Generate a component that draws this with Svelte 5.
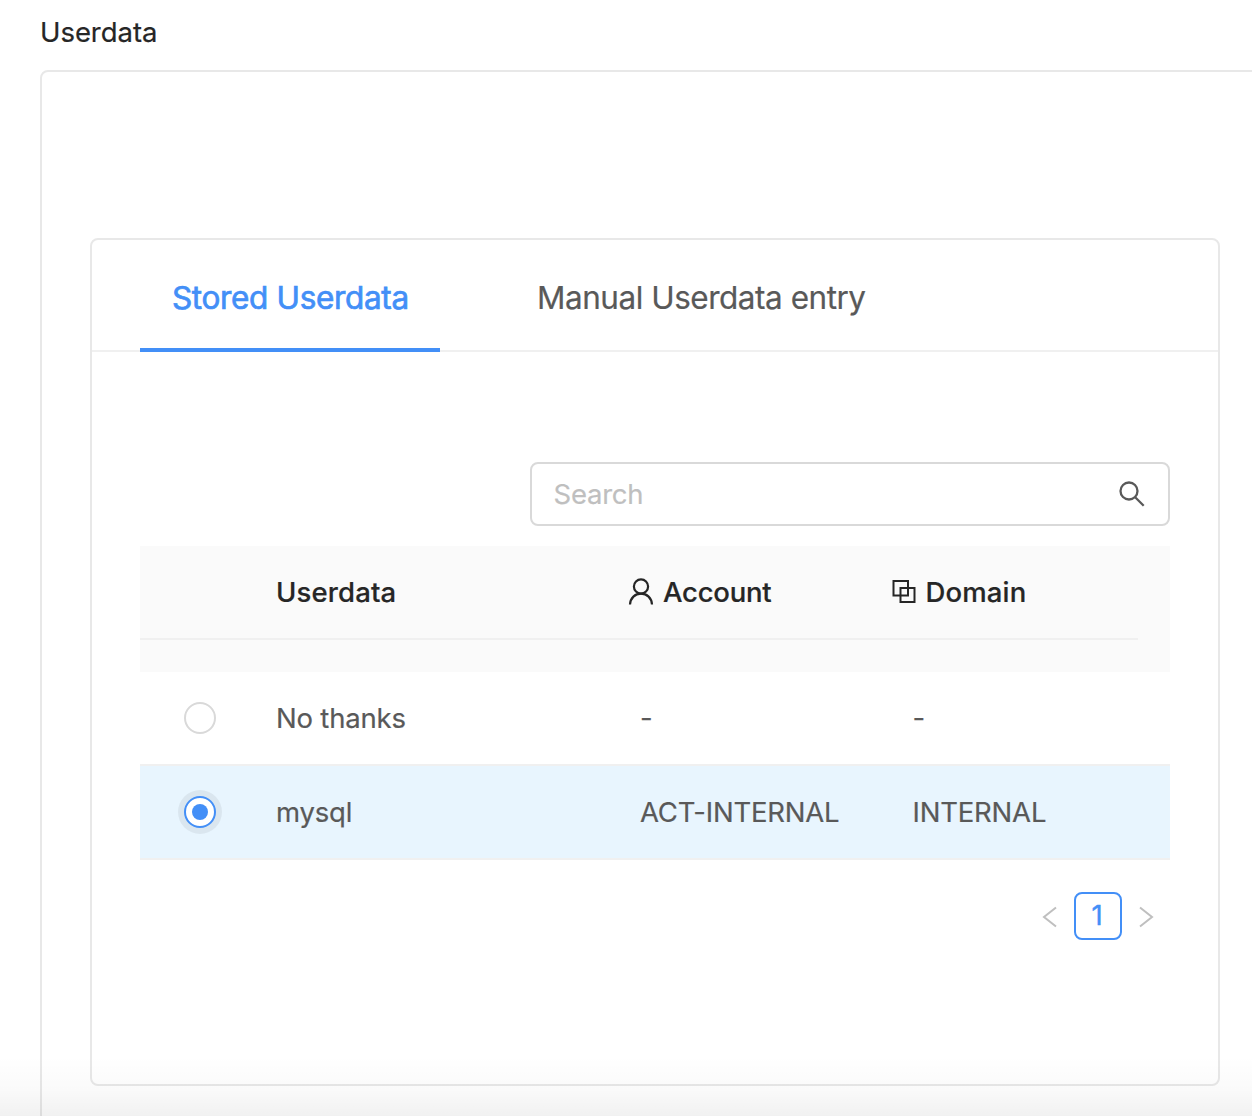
<script>
  let selected = $state('mysql');
  const tabs = ['Stored Userdata', 'Manual Userdata entry'];
  const rows = [
    { name: 'No thanks', account: '-', domain: '-' },
    { name: 'mysql', account: 'ACT-INTERNAL', domain: 'INTERNAL' }
  ];
</script>

<main class="page">
  <h1 class="title">Userdata</h1>
  <section class="outer">
    <div class="card">
      <nav class="tabs">
        <button class="tab active">{tabs[0]}</button>
        <button class="tab">{tabs[1]}</button>
      </nav>
      <div class="content">
        <div class="search">
          <span class="placeholder">Search</span>
          <svg viewBox="0 0 28 28" width="28" height="28" fill="none" stroke="#595959" stroke-width="2.3">
            <circle cx="11" cy="11" r="8.500" />
            <path d="M17.200 17.200 25.700 25.700" />
          </svg>
        </div>

        <div class="table">
          <div class="thead">
            <div class="row head">
              <div></div>
              <div>Userdata</div>
              <div class="with-icon account">
                <svg viewBox="0 0 26 28" width="26" height="28" fill="none" stroke="#262626" stroke-width="2.200">
                  <circle cx="13" cy="8.500" r="7.100" />
                  <path d="M2 26.500C2.400 20 7 15.600 13 15.600s10.600 4.400 11 10.900" />
                </svg>
                <span>Account</span>
              </div>
              <div class="with-icon domain">
                <svg viewBox="0 0 24 26" width="24" height="26" fill="none" stroke="#262626" stroke-width="2">
                  <path d="M1.500 2h14.500v14.500h-14.500zM8.500 9h14v14h-14z" />
                </svg>
                <span>Domain</span>
              </div>
            </div>
          </div>
          {#each rows as row}
            <div class="row body" class:selected={selected === row.name}>
              <button class="radio" aria-label={row.name} onclick={() => (selected = row.name)}></button>
              <div>{row.name}</div>
              <div>{row.account}</div>
              <div>{row.domain}</div>
            </div>
          {/each}
        </div>

        <div class="pagination">
          <svg viewBox="0 0 16 24" width="16" height="24" fill="none" stroke="#bfbfbf" stroke-width="2">
            <path d="M14 3.500 2 13l12 9.500" />
          </svg>
          <button class="current">1</button>
          <svg viewBox="0 0 16 24" width="16" height="24" fill="none" stroke="#bfbfbf" stroke-width="2">
            <path d="M2 3.500 14 13 2 22.500" />
          </svg>
        </div>
      </div>
    </div>
  </section>
  <div class="fade"></div>
</main>

<style>
  :global(body) { overflow: hidden; background: #fff; }
  .page {
    position: relative;
    box-sizing: border-box;
    width: 1252px;
    height: 1116px;
    padding-left: 40px;
    overflow: hidden;
    font-family: Inter, "Liberation Sans", sans-serif;
    font-size: 27.5px;
    color: #595959;
    white-space: nowrap;
    -webkit-text-stroke: 0.2px currentColor;
  }
  .page * { box-sizing: border-box; }
  button { padding: 0; border: 0; background: none; font: inherit; color: inherit; }
  .title {
    display: flex;
    align-items: center;
    height: 70px;
    margin: 0;
    padding-bottom: 6px;
    font-size: inherit;
    font-weight: 400;
    letter-spacing: -0.05px;
    color: #262626;
  }
  .outer {
    width: 1300px;
    height: 1300px;
    padding: 166px 0 0 48px;
    border: 2px solid #e8e8e8;
    border-radius: 8px;
  }
  .card {
    width: 1130px;
    height: 848px;
    border: 2px solid #e8e8e8;
    border-radius: 8px;
  }
  .tabs {
    display: flex;
    gap: 65px;
    height: 112px;
    padding-left: 48px;
    border-bottom: 2px solid #f0f0f0;
    font-size: 31.5px;
  }
  .tab {
    height: 112px;
    padding: 6px 32px 0;
    border-bottom: 4px solid transparent;
    letter-spacing: -0.48px;
  }
  .tab.active {
    width: 300px;
    text-align: left;
    letter-spacing: -0.34px;
    border-color: #438ff7;
    color: #438ff7;
    -webkit-text-stroke: 0.7px #438ff7;
  }
  .content { padding: 110px 48px 0; }
  .search {
    display: flex;
    align-items: center;
    justify-content: space-between;
    width: 640px;
    height: 64px;
    margin-left: auto;
    padding: 0 22px 0 21.5px;
    border: 2px solid #d9d9d9;
    border-radius: 8px;
    letter-spacing: -0.25px;
    color: #bfbfbf;
  }
  .table { margin-top: 20px; }
  .thead { height: 126px; padding-right: 32px; background: #fafafa; }
  .row {
    display: grid;
    grid-template-columns: 136px 364px 272.5px 1fr;
    align-items: center;
    height: 94px;
    border-bottom: 2px solid #f0f0f0;
    letter-spacing: -0.2px;
  }
  .head { color: #262626; font-weight: 500; letter-spacing: 0.15px; }
  .with-icon { display: flex; align-items: center; gap: 9px; margin-left: -12px; }
  .account { letter-spacing: -0.25px; }
  .domain { margin-left: -21px; gap: 10px; }
  .selected { background: #e8f5fe; }
  .radio {
    display: grid;
    place-items: center;
    width: 32px;
    height: 32px;
    margin-left: 44px;
    border: 2px solid #d9d9d9;
    border-radius: 50%;
    background: #fff;
  }
  .selected .radio { border-color: #438ff7; box-shadow: 0 0 0 6px rgba(0, 0, 0, 0.06); }
  .selected .radio::after {
    content: "";
    width: 16px;
    height: 16px;
    border-radius: 50%;
    background: #438ff7;
  }
  .pagination {
    display: flex;
    align-items: center;
    justify-content: flex-end;
    gap: 16px;
    margin-top: 32px;
    padding-right: 16px;
  }
  .current {
    width: 48px;
    height: 48px;
    padding: 0 2px 2px 0;
    border: 2px solid #438ff7;
    border-radius: 8px;
    color: #438ff7;
    -webkit-text-stroke: 0.4px #438ff7;
  }
  .fade {
    position: absolute;
    inset: auto 0 0;
    height: 60px;
    background: linear-gradient(rgba(0, 0, 0, 0), rgba(0, 0, 0, 0.018) 55%, rgba(0, 0, 0, 0.055));
  }
</style>
